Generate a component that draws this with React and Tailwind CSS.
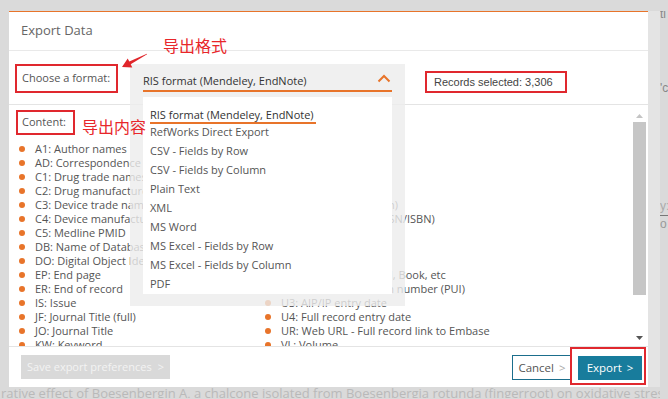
import React from 'react';

const formats = [
  'RIS format (Mendeley, EndNote)',
  'RefWorks Direct Export',
  'CSV - Fields by Row',
  'CSV - Fields by Column',
  'Plain Text',
  'XML',
  'MS Word',
  'MS Excel - Fields by Row',
  'MS Excel - Fields by Column',
  'PDF',
];

const leftFields = [
  'A1: Author names',
  'AD: Correspondence address',
  'C1: Drug trade names',
  'C2: Drug manufacturer',
  'C3: Device trade names',
  'C4: Device manufacturer',
  'C5: Medline PMID',
  'DB: Name of Database',
  'DO: Digital Object Identifier (DOI)',
  'EP: End page',
  'ER: End of record',
  'IS: Issue',
  'JF: Journal Title (full)',
  'JO: Journal Title',
  'KW: Keyword',
  'LA: Language',
];

const rightFields = [
  'LA: Language of text',
  'M1: Other identifier',
  'N2: Abstract',
  'PB: Publisher',
  'N1: Notes (Publication)',
  'SN: Serial number (ISSN/ISBN)',
  'SP: Start page',
  'T1: Title',
  'T2: Source title',
  'TY: Reference: Journal, Book, etc',
  'U2: Embase accession number (PUI)',
  'U3: AIP/IP entry date',
  'U4: Full record entry date',
  'UR: Web URL - Full record link to Embase',
  'VL: Volume',
  'Y1: Year',
];

const FieldItem = ({ label }) => (
  <div className="flex items-center h-[14px] whitespace-nowrap">
    <span className="w-[6px] h-[6px] rounded-full bg-[#e8742a] mr-[10px] shrink-0" />
    <span>{label}</span>
  </div>
);

export default function App() {
  return (
    <div className="w-[668px] h-[399px] overflow-hidden bg-[#dadada] flex flex-col font-['Open_Sans',sans-serif]">
      <div className="flex h-[387px] pt-[11px] shrink-0">
        <div className="w-[9px] shrink-0" />

        {/* modal */}
        <div className="relative w-[639px] h-[376px] bg-white border-t border-[#e8742a] flex flex-col shrink-0">
          {/* header */}
          <div className="h-[39px] px-[12px] flex items-center border-b border-[#e9e9e9] text-[13px] text-[#666]">
            Export Data
          </div>

          {/* format row */}
          <div className="h-[54px] flex items-start border-b border-[#e4e4e4] shrink-0">
            <div className="ml-[6px] mt-[13px] h-[29px] w-[103px] border-2 border-[#e0282e] flex items-center pl-[5px] text-[11px] text-[#555] whitespace-nowrap">
              Choose a format:
            </div>
            <div className="ml-[307px] mt-[20px] h-[22px] w-[142px] border-2 border-[#e0282e] flex items-center pl-[7px] text-[11px] text-[#444] font-['Liberation_Sans',Arial,sans-serif] whitespace-nowrap">
              Records selected: 3,306
            </div>
          </div>

          {/* content */}
          <div className="flex-1 flex min-h-0">
            <div className="flex-1 flex flex-col overflow-hidden">
              <div className="mt-[5px] ml-[7px] h-[25px] w-[59px] border-2 border-[#e0282e] flex items-center pl-[4px] text-[11px] text-[#555] shrink-0">
                Content:
              </div>
              <div className="mt-[7px] ml-[10px] grid grid-cols-[246px_1fr] text-[11px] leading-[14px] text-[#555]">
                <div className="flex flex-col overflow-hidden">
                  {leftFields.map((f) => (
                    <FieldItem key={f} label={f} />
                  ))}
                </div>
                <div className="flex flex-col">
                  {rightFields.map((f) => (
                    <FieldItem key={f} label={f} />
                  ))}
                </div>
              </div>
            </div>
            {/* scrollbar */}
            <div className="w-[15px] mr-[1px] flex flex-col items-center pt-[5px] pb-[2px] shrink-0">
              <svg width="9" height="12" viewBox="0 0 9 12">
                <polygon points="1,8 8,8 4.5,4" fill="#c4c4c4" />
              </svg>
              <div className="w-[13px] h-[173px] bg-[#c6c6c6]" />
              <div className="flex-1" />
              <svg width="9" height="12" viewBox="0 0 9 12">
                <polygon points="1,4 8,4 4.5,8" fill="#555" />
              </svg>
            </div>
          </div>

          {/* footer */}
          <div className="h-[41px] border-t border-[#e4e4e4] flex items-start shrink-0">
            <div className="ml-[12px] mt-[8px] h-[24px] w-[149px] bg-[#d9d9d9] flex items-center justify-center text-[11px] text-[#f3f3f3] whitespace-nowrap">
              Save export preferences <span className="ml-[6px]">&gt;</span>
            </div>
            <div className="ml-auto mt-[8px] h-[25px] w-[60px] border border-[#1b6e8c] flex items-center justify-center text-[11.5px] text-[#555] whitespace-nowrap">
              Cancel <span className="ml-[5px] text-[#aaa]">&gt;</span>
            </div>
            <div className="relative z-10 -ml-[2px] mr-[2px] h-[38px] w-[76px] border-2 border-[#e0282e] pl-[6px] pr-[2px] pt-[7px]">
              <div className="h-[24px] bg-[#187c9c] flex items-center justify-center text-[11.5px] text-white whitespace-nowrap">
                Export <span className="ml-[5px]">&gt;</span>
              </div>
            </div>
          </div>

          {/* dropdown */}
          <div className="absolute left-[121px] top-[52px] w-[275px] h-[242px] bg-[#ececec]/80 flex flex-col">
            <div className="mx-[13px] h-[28px] pt-[8px] border-b-2 border-[#e8742a] flex items-center justify-between text-[11px] text-[#333]">
              <span>RIS format (Mendeley, EndNote)</span>
              <svg width="14" height="9" viewBox="0 0 14 9" className="mr-[1px] -mt-[5px]">
                <polyline points="1.5,7.5 7,2 12.5,7.5" fill="none" stroke="#e8742a" strokeWidth="2" />
              </svg>
            </div>
            <div className="mx-[13px] mt-[5px] bg-white pt-[7px] pl-[7px] text-[11px] text-[#555]">
              {formats.map((f, i) => (
                <div key={f} className="h-[19px] flex items-center whitespace-nowrap">
                  {i === 0 ? (
                    <span className="leading-[15px] border-b-2 border-[#e8742a] text-[#333] pr-[2px] mt-[3px]">{f}</span>
                  ) : (
                    f
                  )}
                </div>
              ))}
            </div>
          </div>

          {/* annotations */}
          <span className="absolute z-20 left-[154px] top-[23px] text-[16px] leading-[20px] text-[#e8262a] font-['Noto_Sans_CJK_SC',sans-serif]">
            导出格式
          </span>
          <span className="absolute z-20 left-[73px] top-[104px] text-[16px] leading-[20px] text-[#e8262a] font-['Noto_Sans_CJK_SC',sans-serif]">
            导出内容
          </span>
          <svg className="absolute z-20 left-[109px] top-[39px]" width="32" height="20" viewBox="0 0 32 20">
            <polygon points="4,16 14.3,16.4 12.7,13.2 29.1,3.3 28.9,2.7 11.3,10.5 9.7,7.4" fill="#e0262b" />
          </svg>
        </div>

        {/* page behind, right edge */}
        <div className="flex-1 flex">
          <div className="w-[12px] bg-[#e4e4e4]" />
          <div className="flex-1 flex flex-col text-[12px] leading-[14px] text-[#888] font-['Liberation_Sans',Arial,sans-serif] overflow-hidden">
            <span className="mt-[-4px]">ti</span>
            <span className="mt-[60px]">'c</span>
            <span className="mt-[104px] text-[#aaa]">y:</span>
            <div className="mt-[2px] h-px bg-[#777]" />
            <span className="mt-[1px] text-[#999]">o</span>
          </div>
        </div>
      </div>

      {/* page behind, under the modal */}
      <div className="h-[12px] w-[660px] overflow-hidden whitespace-nowrap text-[13px] leading-[14px] text-[#b9b9b9] -mt-[1px] pl-[1px] font-['Open_Sans',sans-serif] flex">
        <span className="flex-1 overflow-hidden">
          rative effect of Boesenbergin A, a chalcone isolated from Boesenbergia rotunda (fingerroot) on oxidative stress and inflammation
        </span>
      </div>
    </div>
  );
}
